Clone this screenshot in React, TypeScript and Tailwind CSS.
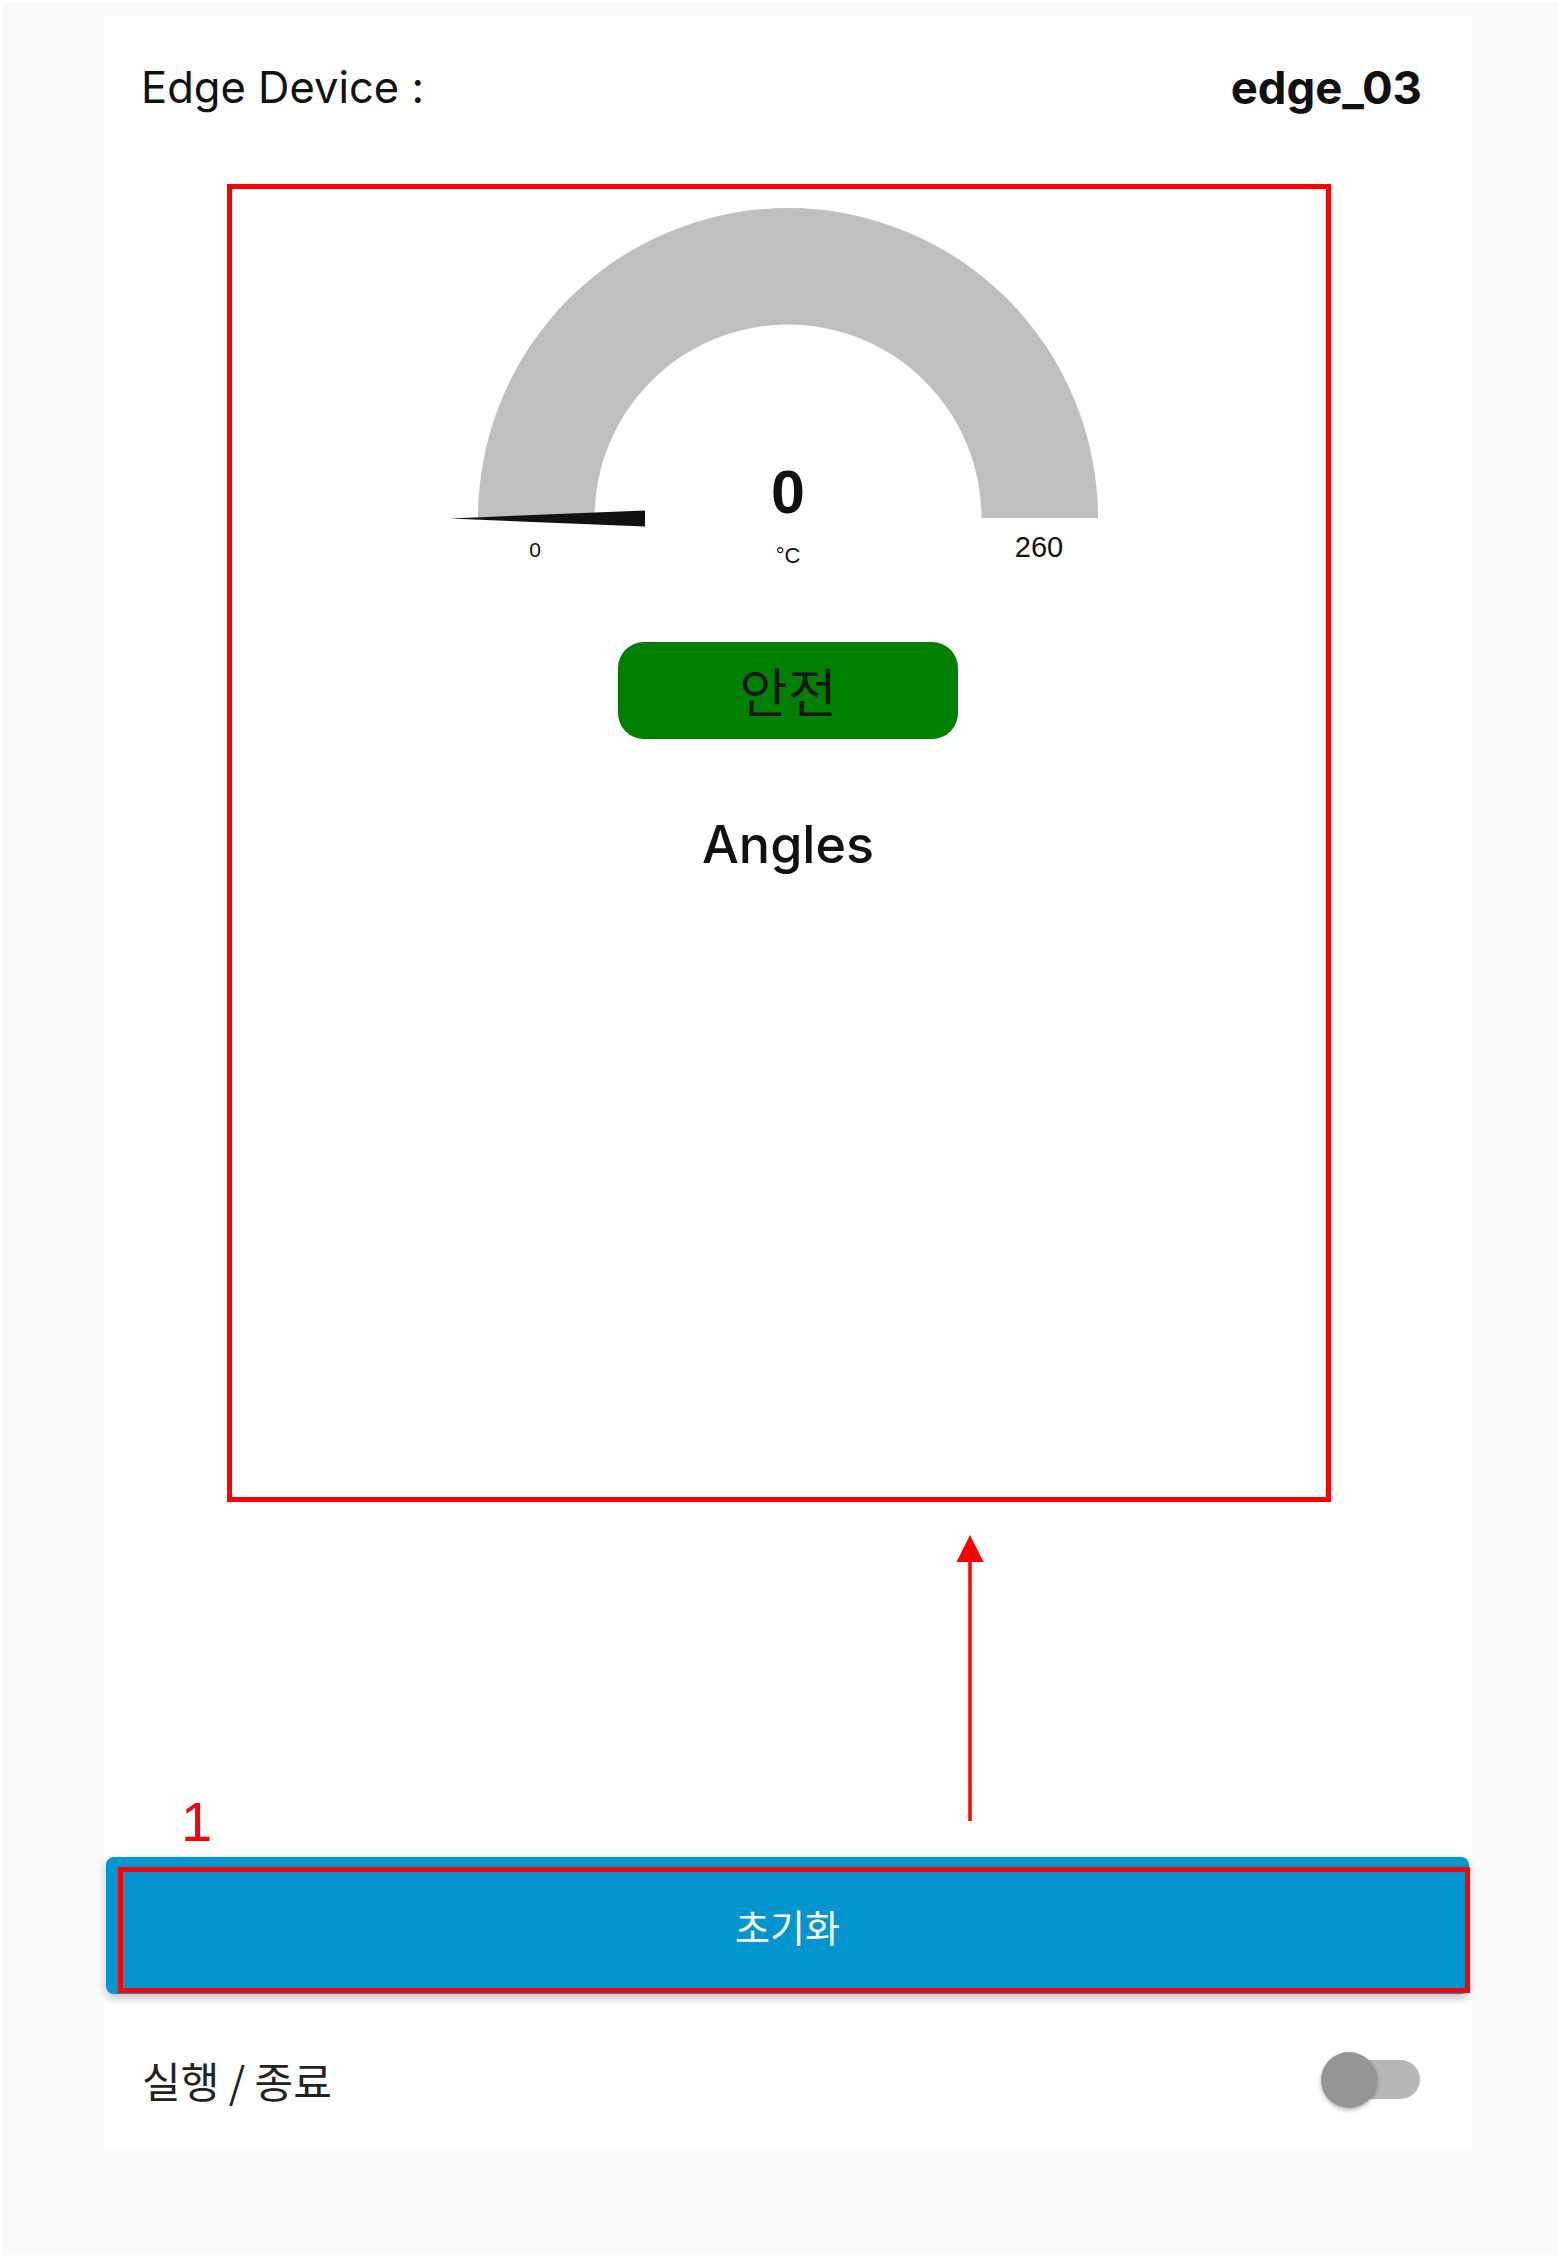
import React from "react";

const SANS = "font-['Inter','Noto_Sans_CJK_KR',sans-serif]";
const KR = "font-['Noto_Sans_CJK_KR','Noto_Sans',sans-serif]";

function Gauge({ value, min, max, unit }: { value: number; min: number; max: number; unit: string }) {
  // arc centre (340, 318) inside a 680 x 370 box
  const cx = 340;
  const cy = 318;
  const R = 310;
  const r = 193.5;
  return (
    <svg width={680} height={370} viewBox="0 0 680 370" className="mx-auto block">
      <path
        d={`M ${cx - R} ${cy} A ${R} ${R} 0 0 1 ${cx + R} ${cy} L ${cx + r} ${cy} A ${r} ${r} 0 0 0 ${cx - r} ${cy} Z`}
        fill="#bfbfbf"
      />
      <polygon points="2,318.5 197,310.5 197,326.5" fill="#111111" />
      <g fontFamily="'Liberation Sans', Arial, sans-serif" fill="#111111" textAnchor="middle">
        <text x={cx} y={313} fontSize={61} fontWeight={700}>
          {value}
        </text>
        <text x={cx} y={363} fontSize={22}>
          {unit}
        </text>
        <text x={87} y={357} fontSize={21}>
          {min}
        </text>
        <text x={591} y={357} fontSize={29}>
          {max}
        </text>
      </g>
    </svg>
  );
}

function Toggle() {
  return (
    <div className="relative h-[56px] w-[99px]">
      <div className="absolute left-[4px] top-[8.5px] h-[39px] w-[95px] rounded-full bg-[#b7b7b7]" />
      <div className="absolute left-0 top-0 h-[56px] w-[56px] rounded-full bg-[#959595] shadow-[0_2px_4px_rgba(0,0,0,0.3)]" />
    </div>
  );
}

export default function App() {
  return (
    <div className="relative h-[2255px] w-[1558px] bg-[#fafafa] pl-[104px] pt-[16px] shadow-[inset_3px_2px_0_white]">
      <div className="flex h-[2133px] w-[1368px] flex-col bg-white">
        <div className={`flex h-[144px] items-center justify-between pl-[37px] pr-[50px] text-[#111] ${SANS}`}>
          <span className="text-[43.5px]">Edge Device :</span>
          <span className="text-[45.5px] font-bold">edge_03</span>
        </div>

        <div className="mt-[40px]">
          <Gauge value={0} min={0} max={260} unit="°C" />
        </div>

        <div className={`mx-auto mt-[72px] flex h-[97px] w-[340px] items-center justify-center rounded-[26px] bg-[#008000] text-[53px] text-[#161616] ${KR}`}>
          안전
        </div>

        <div className={`mt-[80px] text-center text-[52px] font-medium leading-none text-[#111] ${SANS}`}>Angles</div>

        <div className="flex-1" />

        <button
          className={`ml-[2px] mr-[3px] flex h-[137px] items-center justify-center rounded-[8px] bg-[#0395d0] text-[38px] text-white shadow-[0_4px_8px_rgba(0,0,0,0.25)] ${KR}`}
        >
          초기화
        </button>

        <div className={`flex h-[155px] items-center justify-between pl-[38px] pr-[52px] pt-[16px] text-[42px] text-[#222] ${KR}`}>
          <span>실행 / 종료</span>
          <Toggle />
        </div>
      </div>

      {/* annotations drawn over the screenshot */}
      <div className="absolute left-[227px] top-[184px] h-[1318px] w-[1104px] border-[5px] border-[#ff0000]" />
      <svg className="absolute left-[955px] top-[1533px]" width={30} height={290} viewBox="0 0 30 290">
        <polygon points="15,2 1.5,29 28.5,29" fill="#ff0000" />
        <line x1={15} y1={28} x2={15} y2={288} stroke="#ff0000" strokeWidth={3.5} />
      </svg>
      <div className="absolute left-[181px] top-[1794px] font-['Liberation_Sans',Arial,sans-serif] text-[56px] leading-none text-[#ff0000]">
        1
      </div>
      <div className="absolute left-[118px] top-[1867px] h-[126px] w-[1352px] border-[5px] border-[#ff0000]" />
    </div>
  );
}
